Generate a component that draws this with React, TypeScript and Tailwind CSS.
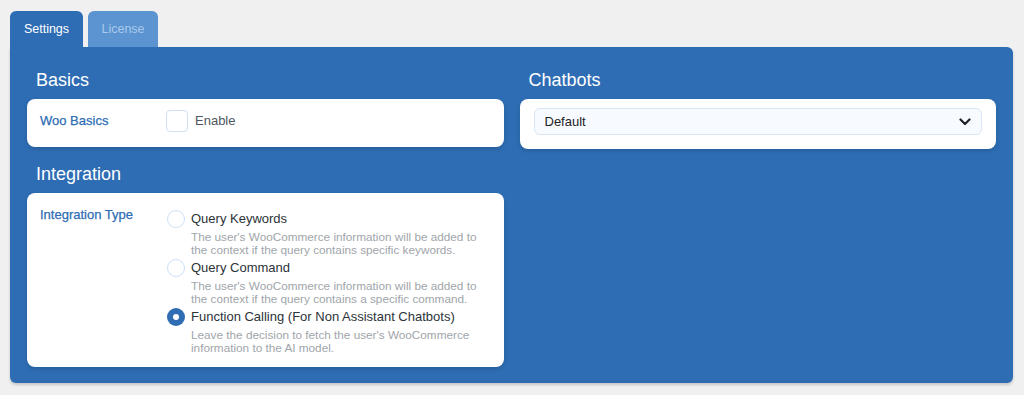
import React, { useState } from 'react';

const font = { fontFamily: '"Liberation Sans", Arial, sans-serif' };

type Option = { id: string; title: string; desc: string[] };

const options: Option[] = [
  {
    id: 'keywords',
    title: 'Query Keywords',
    desc: [
      "The user's WooCommerce information will be added to",
      'the context if the query contains specific keywords.',
    ],
  },
  {
    id: 'command',
    title: 'Query Command',
    desc: [
      "The user's WooCommerce information will be added to",
      'the context if the query contains a specific command.',
    ],
  },
  {
    id: 'function',
    title: 'Function Calling (For Non Assistant Chatbots)',
    desc: [
      "Leave the decision to fetch the user's WooCommerce",
      'information to the AI model.',
    ],
  },
];

const Radio: React.FC<{ checked: boolean }> = ({ checked }) =>
  checked ? (
    <span className="w-[18px] h-[18px] rounded-full bg-[#2e6db4] flex items-center justify-center shrink-0">
      <span className="w-[6px] h-[6px] rounded-full bg-white" />
    </span>
  ) : (
    <span className="w-[18px] h-[18px] rounded-full border-[1.5px] border-[#cfe0f4] bg-white shrink-0" />
  );

export default function App() {
  const [tab, setTab] = useState('settings');
  const [mode, setMode] = useState('function');
  const [enabled, setEnabled] = useState(false);

  return (
    <div className="min-h-[395px] bg-[#f0f0f1] pl-[10px] pr-[11px] pt-[11px]" style={font}>
      {/* tabs */}
      <div className="flex gap-[5px]">
        <button
          onClick={() => setTab('settings')}
          className="h-[36px] w-[73px] rounded-t-[6px] bg-[#2e6db4] text-white text-[12.5px]"
        >
          Settings
        </button>
        <button
          onClick={() => setTab('license')}
          className="h-[36px] w-[70px] rounded-t-[6px] bg-[#5b94d0] text-[#a9c9ec] text-[12.5px]"
        >
          License
        </button>
      </div>

      {/* panel */}
      <div className="bg-[#2e6db4] rounded-b-[6px] rounded-tr-[6px] shadow-[0_2px_3px_rgba(0,0,0,0.18)] px-[17px] pt-[21px] pb-[16px] grid grid-cols-2 gap-x-[16px] items-start">
        <div className="flex flex-col">
          <h2 className="text-white text-[18px] leading-[24px] pl-[9px] mb-[7px]">Basics</h2>
          <div className="bg-white rounded-[8px] shadow-[0_2px_4px_rgba(0,0,0,0.15)] pl-[13px] pt-[11px] pb-[15px] flex items-center">
            <span className="w-[126px] text-[13px] text-[#2e6db4] font-medium" style={{ WebkitTextStroke: '0.25px #2e6db4' }}>
              Woo Basics
            </span>
            <label className="flex items-center gap-[7px] cursor-pointer">
              <span
                onClick={() => setEnabled(!enabled)}
                className="w-[22px] h-[22px] rounded-[4px] border-[1.5px] border-[#cfe0f4] bg-white"
              />
              <span className="text-[13px] text-[#50575e]">Enable</span>
            </label>
          </div>

          <h2 className="text-white text-[18px] leading-[24px] pl-[9px] mt-[15px] mb-[7px]">Integration</h2>
          <div className="bg-white rounded-[8px] shadow-[0_2px_4px_rgba(0,0,0,0.15)] pl-[13px] pt-[17px] pb-[13px] flex items-start">
            <span
              className="w-[127px] text-[13px] leading-[18px] -mt-[4px] text-[#2e6db4] font-medium"
              style={{ WebkitTextStroke: '0.25px #2e6db4' }}
            >
              Integration Type
            </span>
            <div className="flex flex-col gap-[3px]">
              {options.map((o) => (
                <div key={o.id} className="flex gap-[6px] cursor-pointer" onClick={() => setMode(o.id)}>
                  <Radio checked={mode === o.id} />
                  <div className="flex flex-col">
                    <span className="text-[13px] leading-[18px] text-[#2c3338]">{o.title}</span>
                    <span className="mt-[3px] text-[11.75px] leading-[12.5px] text-[#a0a5aa]">
                      {o.desc.map((d) => (
                        <span key={d} className="block">
                          {d}
                        </span>
                      ))}
                    </span>
                  </div>
                </div>
              ))}
            </div>
          </div>
        </div>

        <div className="flex flex-col">
          <h2 className="text-white text-[18px] leading-[24px] pl-[9px] mb-[7px]">Chatbots</h2>
          <div className="bg-white rounded-[8px] shadow-[0_2px_4px_rgba(0,0,0,0.15)] px-[14px] pt-[9px] pb-[14px]">
            <div className="h-[27px] rounded-[6px] border border-[#d8e6f6] bg-[#f7fbff] flex items-center justify-between pl-[10px] pr-[10px]">
              <span className="text-[13px] text-[#1d2327]">Default</span>
              <svg width="12" height="8" viewBox="0 0 12 8" fill="none">
                <path d="M1.5 1.5L6 6L10.5 1.5" stroke="#1d2327" strokeWidth="2.2" strokeLinecap="round" strokeLinejoin="round" />
              </svg>
            </div>
          </div>
        </div>
      </div>
      <div className="hidden">{tab}</div>
    </div>
  );
}
